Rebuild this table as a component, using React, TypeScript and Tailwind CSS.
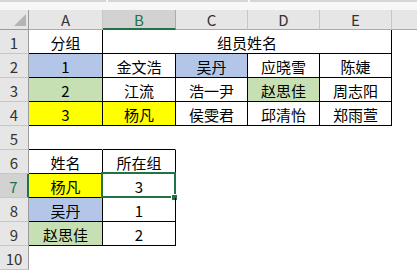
const BLUE = 'bg-[#b4c6e7]';
const GREEN = 'bg-[#c6e0b4]';
const YELLOW = 'bg-[#ffff00]';

type Cell = { t?: string; bg?: string; span?: boolean; hidden?: boolean };

const rows: Cell[][] = [
  [{ t: '分组' }, { t: '组员姓名', span: true }, { hidden: true }, { hidden: true }, { hidden: true }],
  [{ t: '1', bg: BLUE }, { t: '金文浩' }, { t: '吴丹', bg: BLUE }, { t: '应晓雪' }, { t: '陈婕' }],
  [{ t: '2', bg: GREEN }, { t: '江流' }, { t: '浩一尹' }, { t: '赵思佳', bg: GREEN }, { t: '周志阳' }],
  [{ t: '3', bg: YELLOW }, { t: '杨凡', bg: YELLOW }, { t: '侯雯君' }, { t: '邱清怡' }, { t: '郑雨萱' }],
  [{}, {}, {}, {}, {}],
  [{ t: '姓名' }, { t: '所在组' }, {}, {}, {}],
  [{ t: '杨凡', bg: YELLOW }, { t: '3' }, {}, {}, {}],
  [{ t: '吴丹', bg: BLUE }, { t: '1' }, {}, {}, {}],
  [{ t: '赵思佳', bg: GREEN }, { t: '2' }, {}, {}, {}],
  [{}, {}, {}, {}, {}],
];

function blackEdges(r: number, c: number) {
  // r: 1-based row, c: 1-based column (A=1)
  const t1 = r >= 1 && r <= 4 && c >= 1 && c <= 5;
  const t2 = r >= 6 && r <= 9 && c >= 1 && c <= 2;
  const aboveT2 = r === 5 && c <= 2;
  return { right: t1 || t2, bottom: t1 || t2 || aboveT2 };
}

export default function App() {
  const letters = ['A', 'B', 'C', 'D', 'E'];
  return (
    <div className="w-[417px] h-[270px] overflow-hidden bg-white font-['Noto_Sans_CJK_SC',sans-serif] text-[15px] text-black">
      <div className="h-[10px] bg-[#f7f7f7] flex">
        <div className="h-[2px] w-[106px] bg-[#d6d6d6]" />
        <div className="h-[2px] w-[140px] ml-[2px] bg-[#d6d6d6]" />
        <div className="h-[2px] flex-1 ml-[2px] bg-[#d6d6d6]" />
      </div>
      <div className="grid grid-cols-[29px_74px_73px_72px_72px_72px_1fr] grid-rows-[20px_repeat(10,24px)]">
        {/* corner */}
        <div className="bg-[#e6e6e6] border-r border-b border-r-[#9b9b9b] border-b-[#9b9b9b]">
          <svg width="28" height="19" viewBox="0 0 28 19">
            <polygon points="14,16 26,16 26,4" fill="#b4b4b4" />
          </svg>
        </div>
        {letters.map((l) =>
          l === 'B' ? (
            <div
              key={l}
              className="bg-[#d2d2d2] border-r border-r-[#ababab] border-b-2 border-b-[#217346] flex items-end justify-center leading-none pb-[1px] text-[#217346]"
            >
              {l}
            </div>
          ) : (
            <div
              key={l}
              className="bg-[#e6e6e6] border-r border-b border-r-[#c6c6c6] border-b-[#ababab] flex items-end justify-center leading-none pb-[2px] text-[#333]"
            >
              {l}
            </div>
          )
        )}
        <div className="bg-[#e6e6e6] border-b border-b-[#ababab]" />

        {rows.map((row, ri) => {
          const r = ri + 1;
          return [
            r === 7 ? (
              <div
                key={`h${r}`}
                className="bg-[#d2d2d2] border-r-2 border-r-[#217346] border-b border-b-[#c6c6c6] flex items-end justify-center leading-none pb-[3px] text-[#217346]"
              >
                {r}
              </div>
            ) : (
              <div
                key={`h${r}`}
                className="bg-[#e6e6e6] border-r border-b border-r-[#9b9b9b] border-b-[#c6c6c6] flex items-end justify-center leading-none pb-[3px] text-[#333]"
              >
                {r}
              </div>
            ),
            ...row.map((cell, ci) => {
              if (cell.hidden) return null;
              const c = ci + 1;
              const e = blackEdges(r, cell.span ? 5 : c);
              const cls = [
                'relative flex items-end justify-center leading-none pb-[3px] border-r border-b',
                e.right ? 'border-r-black' : 'border-r-transparent',
                e.bottom ? 'border-b-black' : 'border-b-transparent',
                cell.span ? 'col-span-4' : '',
                cell.bg ?? '',
              ].join(' ');
              return (
                <div key={`c${r}-${c}`} className={cls}>
                  {cell.t}
                  {r === 7 && c === 2 && (
                    <>
                      <div className="absolute left-[-2px] top-[-2px] w-[75px] h-[26px] border-2 border-[#217346] pointer-events-none" />
                      <div className="absolute left-[68px] top-[20px] w-[7px] h-[7px] bg-[#217346] border border-white" />
                    </>
                  )}
                </div>
              );
            }),
            <div key={`x${r}`} />,
          ];
        })}
      </div>
    </div>
  );
}
